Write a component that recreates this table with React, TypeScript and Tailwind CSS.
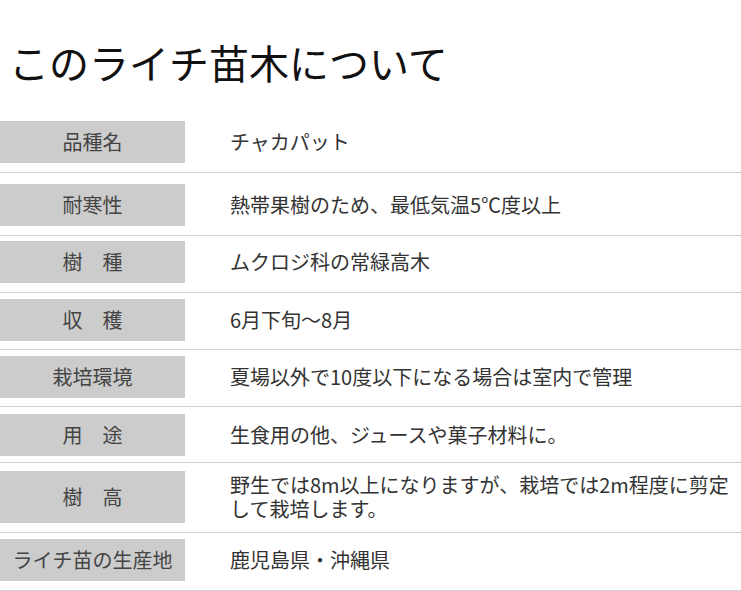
const rows: { label: string; value: string; pad: string; tall?: boolean }[] = [
  { label: '品種名', value: 'チャカパット', pad: 'pt-0 pb-[9px]' },
  { label: '耐寒性', value: '熱帯果樹のため、最低気温5℃度以上', pad: 'pt-[11px] pb-[9px]' },
  { label: '樹\u3000種', value: 'ムクロジ科の常緑高木', pad: 'pt-[5px] pb-[9px]' },
  { label: '収\u3000穫', value: '6月下旬～8月', pad: 'pt-[6px] pb-[8px]' },
  { label: '栽培環境', value: '夏場以外で10度以下になる場合は室内で管理', pad: 'pt-[6px] pb-[8px]' },
  { label: '用\u3000途', value: '生食用の他、ジュースや菓子材料に。', pad: 'pt-[7px] pb-[6px]' },
  { label: '樹\u3000高', value: '野生では8m以上になりますが、栽培では2m程度に剪定して栽培します。', pad: 'pt-[8px] pb-[9px]', tall: true },
  { label: 'ライチ苗の生産地', value: '鹿児島県・沖縄県', pad: 'pt-[6px] pb-[9px]' },
];

export default function App() {
  return (
    <div className="h-[591px] w-[741px] overflow-hidden bg-white font-['Noto_Sans_CJK_JP',sans-serif] text-[#333]">
      <h2 className="pl-[9px] pt-[32px] text-[40px] leading-[60px] font-normal text-[#111]">
        このライチ苗木について
      </h2>

      <dl className="mt-[29px]">
        {rows.map((r) => (
          <div key={r.label} className={`flex border-b border-[#d0d0d0] ${r.pad}`}>
            <dt
              className={`flex w-[185px] shrink-0 items-center justify-center bg-[#cccccc] text-[20px] text-[#444] ${
                r.tall ? 'h-[52px]' : 'h-[42px]'
              }`}
            >
              {r.label}
            </dt>
            <dd className="flex flex-1 items-center pl-[45px] pr-[6px] text-[20px] leading-[24px] text-[#333]">
              {r.value}
            </dd>
          </div>
        ))}
      </dl>
    </div>
  );
}
